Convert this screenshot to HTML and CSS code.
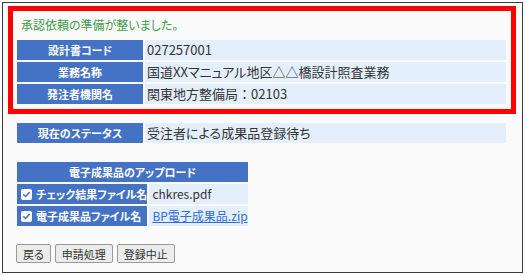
FILE: index.html
```html
<!DOCTYPE html>
<html lang="ja">
<head>
    <meta charset="UTF-8">
    <title>承認依頼</title>
    <link rel="stylesheet" href="styles.css">
</head>
<body>
    <div class="frame">
        <!-- 依頼内容 -->
        <div class="notice-box">
            <p class="notice">承認依頼の準備が整いました。</p>
            <table class="info">
                <tr>
                    <th>設計書コード</th>
                    <td>027257001</td>
                </tr>
                <tr>
                    <th>業務名称</th>
                    <td>国道XXマニュアル地区△△橋設計照査業務</td>
                </tr>
                <tr>
                    <th>発注者機関名</th>
                    <td>関東地方整備局<span class="wide">：</span>02103</td>
                </tr>
            </table>
        </div>

        <!-- ステータス -->
        <table class="info status">
            <tr>
                <th>現在のステータス</th>
                <td>受注者による成果品登録待ち</td>
            </tr>
        </table>

        <!-- アップロード -->
        <table class="upload">
            <tr>
                <th colspan="2" class="upload-head">電子成果品のアップロード</th>
            </tr>
            <tr>
                <th>
                    <span class="check">
                        <svg viewBox="0 0 12 12"><path d="M3 6.2l2 2 4-4.4" fill="none" stroke="#4472c4" stroke-width="1.6" stroke-linecap="round" stroke-linejoin="round"/></svg>
                    </span>チェック結果ファイル名
                </th>
                <td>chkres.pdf</td>
            </tr>
            <tr>
                <th>
                    <span class="check">
                        <svg viewBox="0 0 12 12"><path d="M3 6.2l2 2 4-4.4" fill="none" stroke="#4472c4" stroke-width="1.6" stroke-linecap="round" stroke-linejoin="round"/></svg>
                    </span>電子成果品ファイル名
                </th>
                <td><a href="#">BP電子成果品.zip</a></td>
            </tr>
        </table>

        <div class="actions">
            <button type="button" class="btn">戻る</button>
            <button type="button" class="btn">申請処理</button>
            <button type="button" class="btn">登録中止</button>
        </div>
    </div>
</body>
</html>
```

FILE: styles.css
```css
:root {
    --label-bg: #4472c4;
    --value-bg: #e4effd;
    --text: #333333;
    --notice: #3f9a4a;
    --link: #2f6fd0;
    --frame-bg: #fafafa;
}

* {
    margin: 0;
    padding: 0;
    box-sizing: border-box;
}

body {
    font-family: "Noto Sans CJK JP", "Noto Sans", sans-serif;
    font-feature-settings: "palt";
    font-size: 12px;
    color: var(--text);
    background: #ffffff;
    padding: 2px;
}

.frame {
    width: 521px;
    height: 271px;
    border: 1px solid #3a3a3a;
    background: var(--frame-bg);
    padding-top: 3px;
}

/* Red highlighted box */
.notice-box {
    margin: 0 6px 0 5px;
    border: 5px solid #ff0000;
    padding: 0 3px 3px 2px;
}

.notice {
    color: var(--notice);
    line-height: 18px;
    padding: 5px 0 0 6px;
    margin-bottom: 4px;
}

/* Label / value tables */
table {
    border-collapse: separate;
    border-spacing: 2px;
}

th {
    background: var(--label-bg);
    color: #ffffff;
    font-weight: bold;
    font-size: 11px;
    height: 20px;
    line-height: 20px;
    text-align: center;
    white-space: nowrap;
}

td {
    background: var(--value-bg);
    font-size: 13px;
    height: 20px;
    line-height: 20px;
    padding-left: 2px;
    white-space: nowrap;
}

.wide {
    font-feature-settings: normal;
}

.info {
    width: 493px;
}

.info th {
    width: 126px;
}

.status {
    margin: 7px 0 0 12px;
}

/* Upload section */
.upload {
    width: 235px;
    margin: 15px 0 0 12px;
}

.upload th {
    width: 129px;
    text-align: left;
    padding-left: 4px;
}

.upload th.upload-head {
    text-align: center;
    padding-left: 0;
}

.upload td {
    width: 100px;
    font-size: 12px;
    padding-left: 3px;
}

.check {
    display: inline-block;
    width: 11px;
    height: 11px;
    background: #ffffff;
    border-radius: 2px;
    vertical-align: -1px;
    margin-right: 4px;
}

.check svg {
    display: block;
    width: 11px;
    height: 11px;
}

.upload a {
    color: var(--link);
    text-decoration: underline;
}

/* Buttons */
.actions {
    display: flex;
    gap: 4px;
    margin: 16px 0 0 13px;
}

.btn {
    font-family: inherit;
    font-feature-settings: "palt";
    font-size: 11px;
    color: #333333;
    height: 19px;
    padding: 0 6px;
    background: #ececec;
    border: 1px solid #9a9a9a;
    border-radius: 2px;
}
```
